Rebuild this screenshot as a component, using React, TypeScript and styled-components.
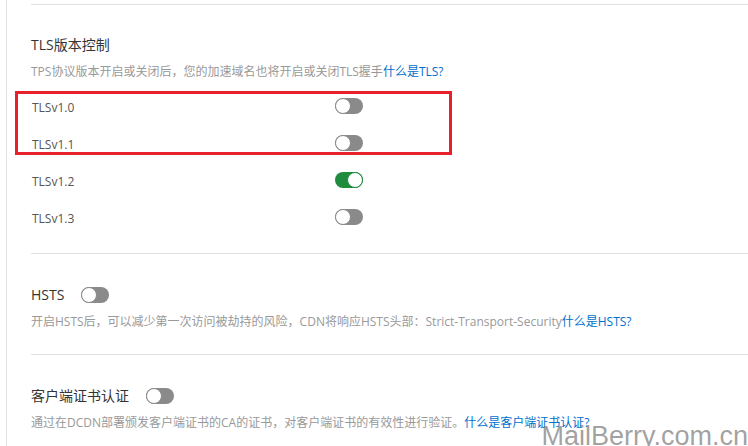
import React from "react";
import styled, { createGlobalStyle } from "styled-components";

const Global = createGlobalStyle`
  html, body { margin: 0; padding: 0; background: #fff; }
  body {
    font-family: "Open Sans", "Noto Sans CJK SC", sans-serif;
    color: #333;
    overflow: hidden;
  }
`;

const Page = styled.div`
  position: relative;
  width: 748px;
  height: 446px;
  padding-left: 6px;
  box-sizing: border-box;
  overflow: hidden;
`;

const Panel = styled.div`
  border-left: 1px solid #e3e3e3;
  padding-left: 24px;
  padding-top: 4px;
  height: 100%;
  box-sizing: border-box;
`;

const Section = styled.section<{ $first?: boolean }>`
  border-top: 1px solid #e0e0e0;
  padding-top: ${(p) => (p.$first ? "30px" : "31px")};
  padding-bottom: ${(p) => (p.$first ? "18px" : "23px")};
  position: relative;
`;

const TitleRow = styled.div`
  display: flex;
  align-items: center;
  gap: 17px;
  height: 20px;
  font-size: 14px;
  line-height: 20px;
  color: #333;
`;

const Desc = styled.p`
  margin: 8px 0 0;
  font-size: 12px;
  line-height: 18px;
  color: #999;
  white-space: nowrap;
`;

const Link = styled.a`
  color: #0070cc;
  text-decoration: none;
`;

const Rows = styled.div`
  position: relative;
  margin-top: 6px;
  display: grid;
  grid-template-columns: 304px auto;
  grid-auto-rows: 37px;
  align-items: center;
  justify-content: start;
`;

const RowLabel = styled.span`
  font-size: 12px;
  color: #555;
  padding-left: 1px;
  padding-top: 3px;
`;

const Track = styled.span<{ $on?: boolean }>`
  position: relative;
  display: inline-block;
  width: 28px;
  height: 16px;
  border-radius: 8px;
  background: ${(p) => (p.$on ? "#1e8c3c" : "#8a8a8a")};
  box-sizing: border-box;
`;

const Knob = styled.span<{ $on?: boolean }>`
  position: absolute;
  top: 0;
  left: ${(p) => (p.$on ? "12px" : "0")};
  width: 16px;
  height: 16px;
  border-radius: 50%;
  background: #fff;
  border: 1px solid ${(p) => (p.$on ? "#1e8c3c" : "#8a8a8a")};
  box-sizing: border-box;
`;

const Highlight = styled.div`
  position: absolute;
  left: -16px;
  top: 4px;
  width: 437px;
  height: 64px;
  border: 3px solid #e8202a;
  box-sizing: border-box;
  pointer-events: none;
`;

const Watermark = styled.div`
  position: absolute;
  right: 0px;
  bottom: -6px;
  font-family: "Liberation Sans", sans-serif;
  font-size: 27px;
  color: rgba(120, 120, 120, 0.7);
  text-shadow: 1px 1px 0 rgba(255, 255, 255, 0.8);
  white-space: nowrap;
`;

const Toggle = ({ on }: { on?: boolean }) => (
  <Track $on={on}>
    <Knob $on={on} />
  </Track>
);

const versions = [
  { name: "TLSv1.0", on: false },
  { name: "TLSv1.1", on: false },
  { name: "TLSv1.2", on: true },
  { name: "TLSv1.3", on: false },
];

export default function App() {
  return (
    <Page>
      <Global />
      <Panel>
        <Section $first>
          <TitleRow>TLS版本控制</TitleRow>
          <Desc>
            TPS协议版本开启或关闭后，您的加速域名也将开启或关闭TLS握手
            <Link>什么是TLS?</Link>
          </Desc>
          <Rows>
            <Highlight />
            {versions.map((v) => (
              <React.Fragment key={v.name}>
                <RowLabel>{v.name}</RowLabel>
                <Toggle on={v.on} />
              </React.Fragment>
            ))}
          </Rows>
        </Section>
        <Section>
          <TitleRow>
            HSTS
            <Toggle />
          </TitleRow>
          <Desc>
            开启HSTS后，可以减少第一次访问被劫持的风险，CDN将响应HSTS头部：Strict-Transport-Security
            <Link>什么是HSTS?</Link>
          </Desc>
        </Section>
        <Section>
          <TitleRow>
            客户端证书认证
            <Toggle />
          </TitleRow>
          <Desc>
            通过在DCDN部署颁发客户端证书的CA的证书，对客户端证书的有效性进行验证。
            <Link>什么是客户端证书认证?</Link>
          </Desc>
        </Section>
      </Panel>
      <Watermark>MailBerry.com.cn</Watermark>
    </Page>
  );
}
